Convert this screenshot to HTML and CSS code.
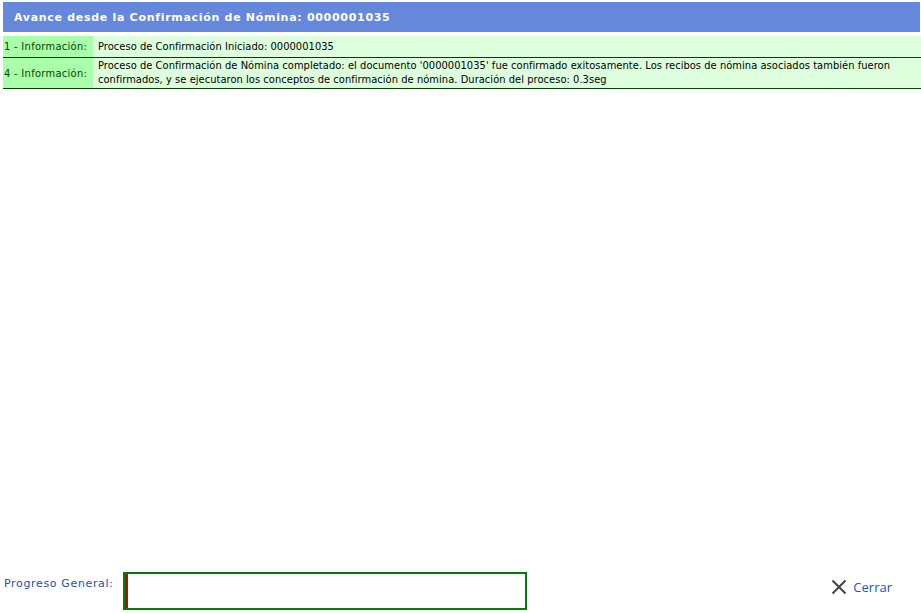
FILE: index.html
```html
<!DOCTYPE html>
<html lang="es">
<head>
<meta charset="utf-8">
<title>Avance</title>
<link rel="stylesheet" href="styles.css">
</head>
<body>
<div class="page">
  <div class="header">Avance desde la Confirmación de Nómina: 0000001035</div>
  <table class="log">
    <tr class="r1">
      <td class="lbl">1 - Información:</td>
      <td class="msg">Proceso de Confirmación Iniciado: 0000001035</td>
    </tr>
    <tr class="r2">
      <td class="lbl">4 - Información:</td>
      <td class="msg">Proceso de Confirmación de Nómina completado: el documento '0000001035' fue confirmado exitosamente. Los recibos de nómina asociados también fueron confirmados, y se ejecutaron los conceptos de confirmación de nómina. Duración del proceso: 0.3seg</td>
    </tr>
  </table>
  <div class="spacer"></div>
  <div class="footer">
    <span class="plabel">Progreso General:</span>
    <div class="pbox"><div class="pbar"></div></div>
    <div class="close">
      <svg width="16" height="16" viewBox="0 0 16 16"><path d="M1.5 1.5 L14.5 14.5 M14.5 1.5 L1.5 14.5" stroke="#444" stroke-width="2" fill="none"/></svg>
      <span>Cerrar</span>
    </div>
  </div>
</div>
</body>
</html>
```
FILE: styles.css
```css
html, body {
  margin: 0;
  padding: 0;
  background: #fff;
}
.page {
  height: 613px;
  display: flex;
  flex-direction: column;
  font-family: "DejaVu Sans Condensed", "DejaVu Sans", sans-serif;
  font-size: 11px;
}
.header {
  margin: 2px 1px 0 3px;
  height: 30px;
  background: #6688dc;
  color: #fff;
  font-family: "DejaVu Sans", sans-serif;
  font-weight: bold;
  font-size: 11px;
  letter-spacing: 0.7px;
  line-height: 31px;
  padding-left: 11px;
  box-sizing: border-box;
}
.log {
  margin: 4px 0 0 3px;
  width: 918px;
  border-collapse: collapse;
}
.log td {
  padding: 0;
  border-bottom: 1px solid #004400;
  vertical-align: middle;
}
.log .lbl {
  width: 89px;
  background: #aaffaa;
  color: #004400;
  padding-left: 1px;
  white-space: nowrap;
  letter-spacing: 0.3px;
}
.log .msg {
  background: #ddffdd;
  color: #000;
  padding-left: 5px;
  padding-right: 20px;
  line-height: 14px;
  letter-spacing: 0.05px;
}
.r1 td { height: 21px; }
.r2 td { height: 30px; }
.spacer { flex: 1; }
.footer {
  display: flex;
  align-items: center;
  height: 38px;
  margin-bottom: 3px;
  padding-left: 4px;
}
.plabel {
  color: #2050b0;
  width: 119px;
  align-self: flex-start;
  margin-top: 5px;
  font-family: "DejaVu Sans", sans-serif;
  letter-spacing: 0.65px;
  white-space: nowrap;
}
.pbox {
  width: 400px;
  height: 34px;
  border: 2px solid #008000;
  display: flex;
}
.pbar {
  width: 3px;
  background: #aa1111;
}
.close {
  margin-left: auto;
  margin-right: 29px;
  display: flex;
  align-items: center;
  gap: 6px;
  font-family: "Open Sans", sans-serif;
  font-size: 13px;
  color: #2255cc;
  margin-top: -8px;
}
.close svg { display: block; }
```
